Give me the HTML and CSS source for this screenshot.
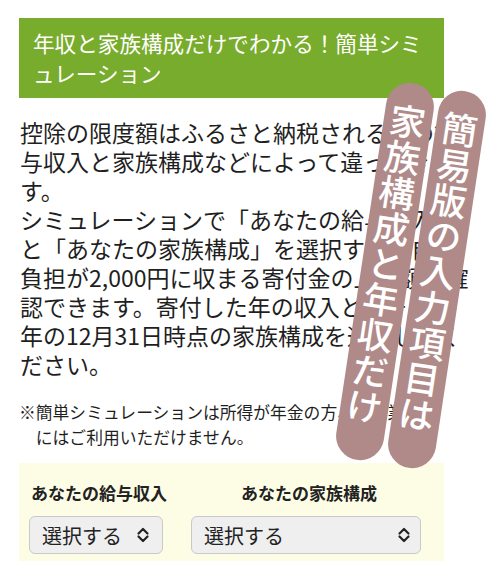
FILE: index.html
```html
<!DOCTYPE html>
<html lang="ja">
<head>
<meta charset="utf-8">
<title>簡単シミュレーション</title>
<link rel="stylesheet" href="styles.css">
</head>
<body>
<main class="page">
  <h2 class="title">年収と家族構成だけでわかる！簡単シミュレーション</h2>
  <p class="lead">控除の限度額はふるさと納税される方の給<br>与収入と家族構成などによって違ってきま<br>す。<br>シミュレーションで「あなたの給与収入」<br>と「あなたの家族構成」を選択すると自己<br>負担が2,000円に収まる寄付金の上限額を確<br>認できます。寄付した年の収入と、その<br>年の12月31日時点の家族構成を選択してく<br>ださい。</p>
  <p class="note">※簡単シミュレーションは所得が年金の方、自営業の方にはご利用いただけません。</p>
  <section class="sim">
    <div class="field">
      <div class="label">あなたの給与収入</div>
      <div class="select select-income">
        <span>選択する</span>
        <svg class="chev" width="14" height="16" viewBox="0 0 14 16"><path d="M2.5 6.5 L7 2 L11.5 6.5 M2.5 9.5 L7 14 L11.5 9.5" fill="none" stroke="#222" stroke-width="2.2" stroke-linecap="round" stroke-linejoin="round"/></svg>
      </div>
    </div>
    <div class="field">
      <div class="label">あなたの家族構成</div>
      <div class="select select-family">
        <span>選択する</span>
        <svg class="chev" width="14" height="16" viewBox="0 0 14 16"><path d="M2.5 6.5 L7 2 L11.5 6.5 M2.5 9.5 L7 14 L11.5 9.5" fill="none" stroke="#222" stroke-width="2.2" stroke-linecap="round" stroke-linejoin="round"/></svg>
      </div>
    </div>
  </section>
  <div class="pill pill-a">家族構成と年収だけ</div>
  <div class="pill pill-b">簡易版の入力項目は</div>
</main>
</body>
</html>
```
FILE: styles.css
```css
html, body {
  margin: 0;
  padding: 0;
  background: #ffffff;
}
body {
  font-family: "Noto Sans CJK JP", "Noto Sans", sans-serif;
  color: #1f1f1f;
  overflow: hidden;
}
.page {
  position: relative;
  padding: 18px 0 0 19px;
  height: 561px;
  box-sizing: border-box;
}
.title {
  margin: 0;
  width: 425px;
  box-sizing: border-box;
  padding: 10px 14px;
  background: #78ac2c;
  color: #ffffff;
  font-size: 21.6px;
  font-weight: 400;
  line-height: 30px;
}
.lead {
  margin: 20px 0 0;
  padding-left: 1px;
  font-size: 23px;
  line-height: 29px;
  white-space: nowrap;
}
.note {
  margin: 21px 0 0;
  width: 425px;
  font-size: 16.8px;
  line-height: 25px;
  padding-left: 1em;
  text-indent: -1em;
  box-sizing: border-box;
}
.sim {
  margin-top: 13px;
  width: 425px;
  box-sizing: border-box;
  background: #fdfce4;
  padding: 18px 0 10px 10px;
  display: grid;
  grid-template-columns: 134px 230px;
  column-gap: 28px;
}
.field {
  display: flex;
  flex-direction: column;
  gap: 11px;
}
.label {
  align-self: center;
  margin-left: 6px;
  white-space: nowrap;
  font-size: 17px;
  font-weight: 700;
  line-height: 24px;
  color: #222;
}
.select {
  height: 38px;
  box-sizing: border-box;
  border: 1px solid #c9c9c9;
  border-radius: 6px;
  background: #efefef;
  display: flex;
  align-items: center;
  justify-content: space-between;
  padding: 0 12px 0 12px;
  font-size: 20px;
  color: #222;
}
.select-family {
  padding-right: 9px;
}
.chev {
  flex: none;
}
.pill {
  position: absolute;
  width: 48px;
  height: 381px;
  box-sizing: border-box;
  border-radius: 24px;
  background: #b08a89;
  color: #ffffff;
  writing-mode: vertical-rl;
  font-size: 36px;
  font-weight: 500;
  line-height: 48px;
  padding-top: 21px;
  transform: rotate(8.6deg);
}
.pill-a {
  left: 361px;
  top: 81px;
}
.pill-b {
  left: 413px;
  top: 89px;
}
```
